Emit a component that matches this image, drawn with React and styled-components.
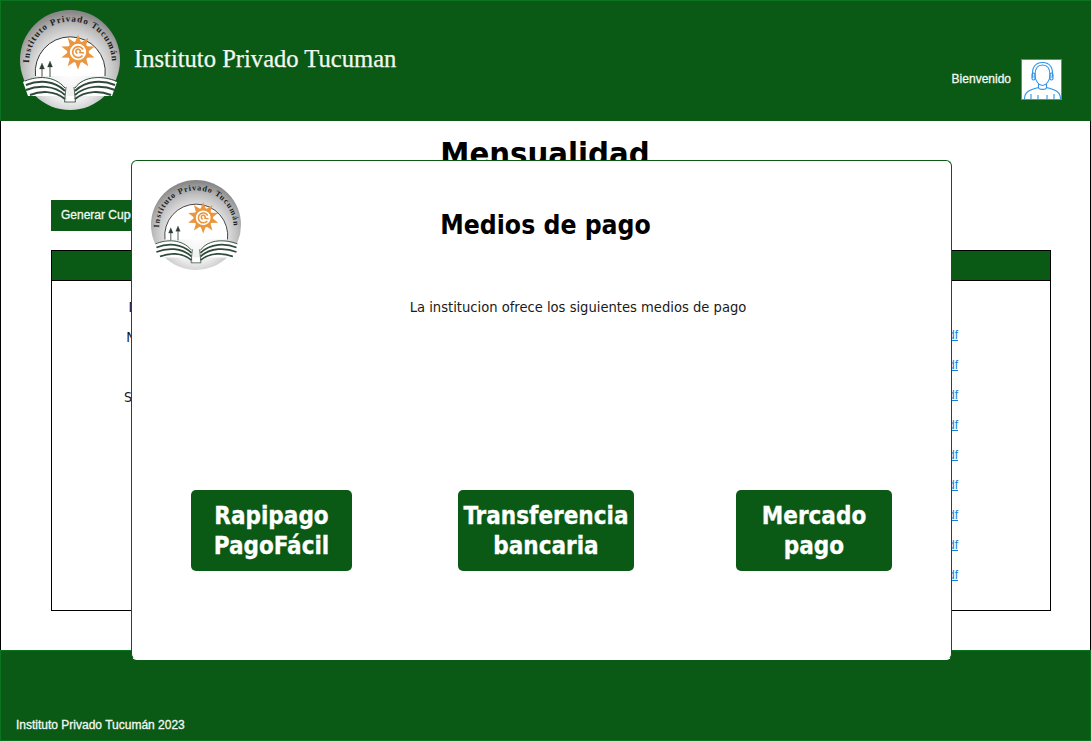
import React from 'react'
import styled, { createGlobalStyle } from 'styled-components'

const GREEN = '#0a5a16'

const GlobalStyle = createGlobalStyle`
    html, body {
        margin: 0;
        padding: 0;
        background: white;
    }
`

const Page = styled.div`
    position: relative;
    display: flex;
    flex-direction: column;
    width: 1091px;
    height: 741px;
    overflow: hidden;
    font-family: "Liberation Sans", Arial, sans-serif;
`

const Header = styled.header`
    display: flex;
    box-sizing: border-box;
    height: 121px;
    padding: 0 28px 0 20px;
    background: ${GREEN};
    border: 1px solid #0b7420;
    border-bottom-color: ${GREEN};
    border-right-color: ${GREEN};
`

const HeaderLogo = styled.div`
    width: 100px;
    height: 100px;
    margin-top: 9px;
    margin-left: -1px;
`

const SiteName = styled.h1`
    margin: 43px 0 0 14px;
    color: #f2f8f0;
    font-family: "Liberation Serif", "Times New Roman", serif;
    font-size: 24.6px;
    font-weight: 400;
    line-height: 30px;
    -webkit-text-stroke: 0.25px #f2f8f0;
`

const UserBox = styled.div`
    display: flex;
    align-items: flex-start;
    gap: 10px;
    margin-left: auto;
    margin-top: 58px;
`

const Welcome = styled.span`
    color: #f2f8f0;
    font-size: 12px;
    line-height: 40px;
    -webkit-text-stroke: 0.3px #f2f8f0;
`

const Avatar = styled.div`
    box-sizing: border-box;
    width: 41px;
    height: 41px;
    background: white;
    border: 1px solid #78867a;
`

const Main = styled.main`
    flex: 1;
    box-sizing: border-box;
    padding: 0 39px 0 50px;
    border-left: 1px solid black;
    border-right: 1px solid black;
`

const PageTitle = styled.h2`
    margin: 14px 0 0;
    padding-right: 12px;
    color: black;
    font-family: "DejaVu Sans Condensed", "DejaVu Sans", sans-serif;
    font-size: 32.5px;
    font-weight: 700;
    line-height: 38px;
    text-align: center;
`

const CouponButton = styled.button`
    display: block;
    width: 150px;
    height: 31px;
    margin-top: 27px;
    padding: 0 10px 2px;
    background: ${GREEN};
    border: 0;
    color: #f2f8f0;
    font-family: "Liberation Sans", Arial, sans-serif;
    font-size: 12px;
    text-align: left;
    -webkit-text-stroke: 0.3px #f2f8f0;
`

const TableBox = styled.section`
    box-sizing: border-box;
    width: 1000px;
    height: 361px;
    margin-top: 19px;
    border: 1px solid black;
`

const TableHead = styled.div`
    height: 29px;
    background: ${GREEN};
    border-bottom: 1px solid black;
`

const TableBody = styled.div`
    padding-top: 11px;
`

const Row = styled.div`
    display: flex;
    justify-content: space-between;
    height: 30px;
    padding-right: 92px;
    font-size: 12px;
    line-height: 30px;
`

const Month = styled.span`
    width: 218px;
    color: #1a1a1a;
    font-family: "DejaVu Sans Condensed", "DejaVu Sans", sans-serif;
    font-size: 14.2px;
    text-align: center;
`

const FileLink = styled.a`
    margin-top: -2px;
    color: #1b7ed6;
    text-decoration: underline;
`

const Footer = styled.footer`
    display: flex;
    align-items: flex-end;
    box-sizing: border-box;
    height: 91px;
    padding: 0 15px 8px;
    background: ${GREEN};
    border: 1px solid #0b7420;
    color: #f2f8f0;
    font-size: 12px;
    line-height: 14px;
    -webkit-text-stroke: 0.3px #f2f8f0;
`

const Modal = styled.div`
    position: absolute;
    top: 160px;
    left: 131px;
    display: flex;
    flex-direction: column;
    box-sizing: border-box;
    width: 821px;
    height: 500px;
    background: white;
    border: 1px solid ${GREEN};
    border-bottom-color: white;
    border-radius: 6px;
`

const ModalHeading = styled.div`
    display: flex;
    height: 109px;
    padding: 19px 0 0 19px;
`

const ModalLogo = styled.div`
    flex: none;
    width: 90px;
    height: 90px;
`

const ModalTitle = styled.h2`
    flex: 1;
    margin: 26px 0 0;
    padding-right: 101px;
    color: black;
    font-family: "DejaVu Sans Condensed", "DejaVu Sans", sans-serif;
    font-size: 26.3px;
    font-weight: 700;
    line-height: 38px;
    text-align: center;
`

const ModalText = styled.p`
    margin: 9px 0 0;
    padding-left: 73px;
    color: #1a1a1a;
    font-family: "DejaVu Sans Condensed", "DejaVu Sans", sans-serif;
    font-size: 14.6px;
    line-height: 18px;
    text-align: center;
`

const PayRow = styled.div`
    display: flex;
    margin-top: 174px;
    padding-left: 59px;
`

const PayButton = styled.button`
    box-sizing: border-box;
    width: ${props => props.$width}px;
    height: 81px;
    margin-left: ${props => props.$offset}px;
    padding: 1px 0 0;
    background: ${GREEN};
    border: 0;
    border-radius: 5px;
    color: white;
    font-family: "DejaVu Sans Condensed", "DejaVu Sans", sans-serif;
    font-size: 24px;
    font-weight: 700;
    line-height: 30px;
    text-align: center;
    -webkit-text-stroke: 0.3px white;
`

const sunRays = [0, 36, 72, 108, 144, 180, 216, 252, 288, 324]

function Logo({ id }) {
    return (
        <svg viewBox="0 0 100 100" width="100%" height="100%">
            <defs>
                <radialGradient id={id + 'Rim'} cx="50%" cy="62%" r="60%">
                    <stop offset="0%" stopColor="#ffffff" />
                    <stop offset="50%" stopColor="#ececec" />
                    <stop offset="78%" stopColor="#bdbdbd" />
                    <stop offset="100%" stopColor="#888888" />
                </radialGradient>
                <path id={id + 'Arc'} d="M 9 53 A 41 41 0 1 1 92 53" />
            </defs>
            <circle cx="50" cy="50" r="50" fill={'url(#' + id + 'Rim)'} />
            <path d="M 15.5 66 A 35 35 0 1 1 85 66" fill="#fff" stroke="#222" strokeWidth="0.9" />
            <text fontFamily="'Liberation Serif', serif" fontSize="9" fontWeight="700" fill="#1c1c1c" letterSpacing="1">
                <textPath href={'#' + id + 'Arc'}>Instituto Privado  Tucumán</textPath>
            </text>
            <g fill="#e9963e">
                {sunRays.map(angle => (
                    <path key={angle} d="M 54.5 34 L 58 24.5 L 61.5 34 Z" transform={'rotate(' + angle + ' 58 42)'} />
                ))}
            </g>
            <circle cx="58" cy="42" r="9.5" fill="#fff" stroke="#e9963e" strokeWidth="2.6" />
            <path d="M 62.5 45.5 A 5.5 5.5 0 1 1 63 39.5 M 57.5 43.5 A 2.2 2.2 0 1 1 60 42.5 L 64 43" fill="none" stroke="#e9963e" strokeWidth="1.7" />
            <g fill="#2f3f35" stroke="#2f3f35">
                <path d="M 22 53 L 19.5 59 L 24.5 59 Z" strokeWidth="0.3" />
                <path d="M 22 58 L 22 68" strokeWidth="0.9" />
                <path d="M 30 51 L 27.5 57 L 32.5 57 Z" strokeWidth="0.3" />
                <path d="M 30 56 L 30 67" strokeWidth="0.9" />
            </g>
            <path d="M 3 72 C 14 66 34 62 46 79 L 47 92 L 54 92 L 55 79 C 62 64 84 67 97 72 L 92 86 L 8 86 Z" fill="#fff" />
            <g fill="none" stroke="#2f4a3a" strokeWidth="1.9">
                <path d="M 5 71 C 17 66 34 65 45 78" strokeWidth="1" />
                <path d="M 6 75 C 18 70 34 70 45 81" />
                <path d="M 6 80 C 18 75 34 75 45 85" />
                <path d="M 10 85 C 20 81 34 80 45 89" />
                <path d="M 96 71 C 84 66 64 65 55 78" strokeWidth="1" />
                <path d="M 95 75 C 83 70 66 70 55 81" />
                <path d="M 95 80 C 83 75 66 75 55 85" />
                <path d="M 91 85 C 81 81 66 80 55 89" />
                <path d="M 46 77 L 44.5 92 L 55.5 92 L 54 77" strokeWidth="0.8" />
            </g>
        </svg>
    )
}

function PersonIcon() {
    return (
        <svg viewBox="-1 0 39 39" width="39" height="39" fill="none" stroke="#2f93e6" strokeWidth="1.1">
            <path d="M 12 15 C 12 8 15 5 19.5 5 C 24 5 27 8 27 15 C 27 21 23 25.5 19.5 25.5 C 16 25.5 12 21 12 15 Z" />
            <path d="M 10 18 C 8 8 12 2.5 19.5 2.5 C 27 2.5 31 8 29 18" />
            <rect x="9" y="13" width="3" height="7" rx="1.5" />
            <rect x="27" y="13" width="3" height="7" rx="1.5" />
            <path d="M 15.5 24 L 15.5 27.5 C 15.5 30 23.5 30 23.5 27.5 L 23.5 24" />
            <path d="M 1.5 39 C 1.5 32 6 30 15.5 27.5 M 37.5 39 C 37.5 32 33 30 23.5 27.5" />
            <path d="M 8 39 L 8 34 M 31 39 L 31 34 M 15 39 L 15 35 M 24 39 L 24 35" />
        </svg>
    )
}

const months = ['Diciembre', 'Noviembre', 'Octubre', 'Septiembre', 'Agosto', 'Julio', 'Junio', 'Mayo', 'Abril', 'Marzo']

export default function App() {
    return (
        <Page>
            <GlobalStyle />
            <Header>
                <HeaderLogo><Logo id="header" /></HeaderLogo>
                <SiteName>Instituto Privado Tucuman</SiteName>
                <UserBox>
                    <Welcome>Bienvenido</Welcome>
                    <Avatar><PersonIcon /></Avatar>
                </UserBox>
            </Header>
            <Main>
                <PageTitle>Mensualidad</PageTitle>
                <CouponButton>Generar Cupón</CouponButton>
                <TableBox>
                    <TableHead />
                    <TableBody>
                        {months.map((month, i) => (
                            <Row key={month}>
                                <Month>{month}</Month>
                                {i > 0 && <FileLink href="#">cupon.pdf</FileLink>}
                            </Row>
                        ))}
                    </TableBody>
                </TableBox>
            </Main>
            <Footer>Instituto Privado Tucumán 2023</Footer>
            <Modal>
                <ModalHeading>
                    <ModalLogo><Logo id="modal" /></ModalLogo>
                    <ModalTitle>Medios de pago</ModalTitle>
                </ModalHeading>
                <ModalText>La institucion ofrece los siguientes medios de pago</ModalText>
                <PayRow>
                    <PayButton $width={161} $offset={0}>Rapipago<br />PagoFácil</PayButton>
                    <PayButton $width={176} $offset={106}>Transferencia<br />bancaria</PayButton>
                    <PayButton $width={156} $offset={102}>Mercado<br />pago</PayButton>
                </PayRow>
            </Modal>
        </Page>
    )
}
